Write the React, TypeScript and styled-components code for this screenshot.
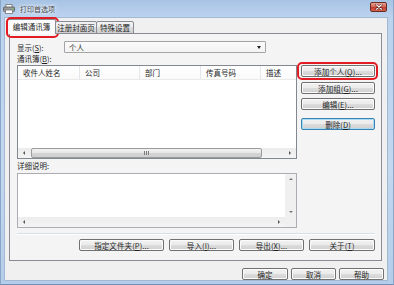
import React from "react";
import styled, { createGlobalStyle, css } from "styled-components";

const FONT = `"Noto Sans CJK SC", "Noto Sans", sans-serif`;

const Global = createGlobalStyle`
  html, body { margin: 0; padding: 0; background: #ffffff; }
  body { font-family: ${FONT}; }
  * { box-sizing: border-box; }
`;

const Window = styled.div`
  width: 394px;
  height: 285px;
  display: flex;
  flex-direction: column;
  background: linear-gradient(#a7c3e4 0px, #bcd3ee 17px, #c3d8ef 60%, #b4cde9 100%);
  border-left: 1px solid #8aa6c8;
  border-right: 1px solid #8aa6c8;
  border-bottom: 1px solid #6f8fb6;
  font-family: ${FONT};
  font-size: 7.5px;
  color: #1f1f1f;
  overflow: hidden;
`;

const TitleBar = styled.div`
  height: 17px;
  display: flex;
  align-items: center;
  padding: 0 6px 0 2px;
  gap: 5px;
`;

const Title = styled.span`
  color: #4a4a4a;
  font-size: 7px;
  text-shadow: 0 0 3px #fff, 0 0 5px #fff;
  flex: 1;
`;

const CloseBtn = styled.div`
  width: 17px;
  height: 10px;
  margin-top: -4px;
  border: 1px solid #6b2c24;
  border-radius: 2px;
  background: linear-gradient(#e8a595, #d4675a 45%, #c2402f 55%, #d3604d);
  display: flex;
  align-items: center;
  justify-content: center;
`;

const Client = styled.div`
  flex: 1;
  margin: 0 5px 3px 3px;
  background: #f0f0f0;
  border: 1px solid #a3b8d3;
  display: flex;
  flex-direction: column;
  padding: 0 3px 0 2px;
`;

const TabStrip = styled.div`
  display: flex;
  align-items: flex-end;
  height: 15px;
  margin-top: 1px;
  position: relative;
  z-index: 2;
`;

const Tab = styled.div<{ $active?: boolean; $w: number }>`
  position: relative;
  width: ${(p) => p.$w}px;
  display: flex;
  align-items: center;
  justify-content: center;
  border: 1px solid #898c95;
  border-radius: 2px 2px 0 0;
  ${(p) =>
    p.$active
      ? css`
          height: 15px;
          background: #fbfbfb;
          border-bottom: none;
          padding-bottom: 1px;
        `
      : css`
          height: 13px;
          margin-left: -1px;
          background: linear-gradient(#f2f2f2, #ebebeb 50%, #dddddd 50%, #cfcfcf);
          border-bottom: 1px solid #898c95;
        `}
`;

const Highlight = styled.div<{ $t: number; $r: number; $b: number; $l: number }>`
  position: absolute;
  top: ${(p) => p.$t}px;
  right: ${(p) => p.$r}px;
  bottom: ${(p) => p.$b}px;
  left: ${(p) => p.$l}px;
  border: 2px solid #e31b23;
  border-radius: 5px;
  pointer-events: none;
`;

const Panel = styled.div`
  margin: -1px 2px 0 2px;
  height: 228px;
  border: 1px solid #898c95;
  background: #f4f4f4;
  padding: 7px 6px 0 7px;
  display: flex;
  flex-direction: column;
`;

const FieldRow = styled.div`
  display: flex;
  align-items: center;
  height: 12px;
`;

const Label = styled.div<{ $w?: number; $h?: number }>`
  ${(p) => (p.$w ? `width: ${p.$w}px;` : "")}
  height: ${(p) => p.$h ?? 11}px;
  line-height: ${(p) => p.$h ?? 11}px;
  white-space: nowrap;
`;

const Select = styled.div`
  width: 202px;
  height: 12px;
  border: 1px solid #a5a5a5;
  border-radius: 1px;
  background: linear-gradient(#fbfbfb, #f3f3f3);
  display: flex;
  align-items: center;
  padding: 0 4px;
  justify-content: space-between;
`;

const Arrow = styled.span`
  width: 0;
  height: 0;
  border-left: 2.5px solid transparent;
  border-right: 2.5px solid transparent;
  border-top: 3px solid #222;
`;

const ListRow = styled.div`
  display: flex;
  gap: 4px;
  height: 94px;
`;

const ListBox = styled.div`
  width: 280px;
  height: 94px;
  border: 1px solid #828790;
  background: #fff;
  display: flex;
  flex-direction: column;
`;

const Header = styled.div`
  height: 14px;
  display: flex;
  border-bottom: 1px solid #eaeaea;
  background: linear-gradient(#ffffff, #fafafa);
`;

const HeaderCell = styled.div<{ $w: number }>`
  width: ${(p) => p.$w}px;
  flex: none;
  padding-left: 5px;
  line-height: 13px;
  border-right: 1px solid #e3e6ea;
  white-space: nowrap;
  &:last-child { border-right: none; flex: 1; }
`;

const ListBody = styled.div`
  flex: 1;
`;

const HScroll = styled.div`
  height: 10px;
  display: flex;
  background: linear-gradient(#ececec, #f4f4f4);
  align-items: stretch;
`;

const ScrollArrow = styled.div<{ $dir: "l" | "r" | "u" | "d" }>`
  width: 12px;
  height: 10px;
  flex: none;
  display: flex;
  align-items: center;
  justify-content: center;
  &::after {
    content: "";
    width: 0;
    height: 0;
    ${(p) =>
      p.$dir === "l"
        ? css`border-top: 2px solid transparent; border-bottom: 2px solid transparent; border-right: 2px solid #555;`
        : p.$dir === "r"
        ? css`border-top: 2px solid transparent; border-bottom: 2px solid transparent; border-left: 2px solid #555;`
        : p.$dir === "u"
        ? css`border-left: 2px solid transparent; border-right: 2px solid transparent; border-bottom: 2px solid #777;`
        : css`border-left: 2px solid transparent; border-right: 2px solid transparent; border-top: 2px solid #777;`}
  }
`;

const Thumb = styled.div<{ $w: number }>`
  width: ${(p) => p.$w}px;
  flex: none;
  margin: 0 0 0 1px;
  border: 1px solid #9c9c9c;
  border-radius: 2px;
  background: linear-gradient(#f3f3f3, #e6e6e6 50%, #d5d5d5 50%, #cfcfcf);
  display: flex;
  align-items: center;
  justify-content: center;
  gap: 1px;
`;

const Grip = styled.span`
  width: 1px;
  height: 4px;
  background: #7a7a7a;
`;

const Track = styled.div`
  flex: 1;
`;

const SideButtons = styled.div`
  width: 77px;
  display: flex;
  flex-direction: column;
`;

const Button = styled.div<{ $w?: number; $focus?: boolean; $mt?: number }>`
  position: relative;
  ${(p) => (p.$w ? `width: ${p.$w}px;` : "")}
  height: 12px;
  flex: none;
  margin-top: ${(p) => p.$mt ?? 0}px;
  border: 1px solid ${(p) => (p.$focus ? "#3c7fb1" : "#707070")};
  border-radius: 2px;
  background: linear-gradient(#f2f2f2, #ebebeb 50%, #dddddd 50%, #cfcfcf);
  box-shadow: inset 0 0 0 1px ${(p) => (p.$focus ? "#a6dcf4" : "#fcfcfc")};
  display: flex;
  align-items: center;
  justify-content: center;
  white-space: nowrap;
  letter-spacing: 0.1px;
`;

const TextBox = styled.div`
  width: 280px;
  height: 55px;
  border: 1px solid #abadb3;
  background: #fff;
  display: grid;
  grid-template-columns: 1fr 11px;
  grid-template-rows: 1fr 10px;
`;

const VScroll = styled.div`
  background: #f0f0f0;
  display: flex;
  flex-direction: column;
  justify-content: space-between;
  align-items: center;
  & > div { width: 11px; height: 10px; }
`;

const Corner = styled.div`
  background: #f0f0f0;
`;

const Separator = styled.div`
  margin-top: 5px;
  height: 2px;
  border-top: 1px solid #d5dfe5;
  border-bottom: 1px solid #ffffff;
`;

const ButtonRow = styled.div`
  margin-top: 4px;
  display: flex;
  justify-content: flex-end;
  gap: 5px;
`;

const DialogButtons = styled.div`
  margin-top: 7px;
  display: flex;
  justify-content: flex-end;
  gap: 3px;
  padding-right: 0px;
`;

const U = styled.span`
  text-decoration: underline;
  text-underline-offset: 1px;
`;

const PrinterIcon = () => (
  <svg width="12" height="10" viewBox="0 0 12 10">
    <rect x="3" y="0.5" width="6" height="3" fill="#fff" stroke="#777" strokeWidth="0.8" />
    <rect x="0.5" y="3" width="11" height="4.5" rx="1" fill="#9a9a9a" stroke="#555" strokeWidth="0.8" />
    <rect x="2.5" y="6" width="7" height="3.5" fill="#fff" stroke="#777" strokeWidth="0.8" />
    <rect x="9" y="4" width="1.5" height="1" fill="#6c6" />
  </svg>
);

const CloseGlyph = () => (
  <svg width="8" height="6" viewBox="0 0 8 6">
    <path d="M1.5 0.8 L6.5 5.2 M6.5 0.8 L1.5 5.2" stroke="#5a1b14" strokeWidth="2.2" strokeLinecap="round" />
    <path d="M1.5 0.8 L6.5 5.2 M6.5 0.8 L1.5 5.2" stroke="#ffffff" strokeWidth="1.2" strokeLinecap="round" />
  </svg>
);

const columns = [
  { label: "收件人姓名", w: 62 },
  { label: "公司", w: 60 },
  { label: "部门", w: 61 },
  { label: "传真号码", w: 60 },
  { label: "描述", w: 35 },
];

export default function App() {
  return (
    <>
      <Global />
      <Window>
        <TitleBar>
          <PrinterIcon />
          <Title>打印首选项</Title>
          <CloseBtn>
            <CloseGlyph />
          </CloseBtn>
        </TitleBar>
        <Client>
          <TabStrip>
            <Tab $active $w={49}>
              编辑通讯簿
              <Highlight $t={-3} $r={-4} $b={-4} $l={-2} />
            </Tab>
            <Tab $w={42}>注册封面页</Tab>
            <Tab $w={38}>特殊设置</Tab>
          </TabStrip>
          <Panel>
            <FieldRow>
              <Label $w={47}>
                显示(<U>S</U>):
              </Label>
              <Select>
                <span>个人</span>
                <Arrow />
              </Select>
            </FieldRow>
            <Label $h={12}>
              通讯簿(<U>B</U>):
            </Label>
            <ListRow>
              <ListBox>
                <Header>
                  {columns.map((c) => (
                    <HeaderCell key={c.label} $w={c.w}>
                      {c.label}
                    </HeaderCell>
                  ))}
                </Header>
                <ListBody />
                <HScroll>
                  <ScrollArrow $dir="l" />
                  <Thumb $w={231}>
                    <Grip />
                    <Grip />
                    <Grip />
                  </Thumb>
                  <Track />
                  <ScrollArrow $dir="r" />
                </HScroll>
              </ListBox>
              <SideButtons>
                <Button>
                  添加个人(<U>Q</U>)...
                  <Highlight $t={-4} $r={-4} $b={-4} $l={-5} />
                </Button>
                <Button $mt={5}>
                  添加组(<U>G</U>)...
                </Button>
                <Button $mt={4}>
                  编辑(<U>E</U>)...
                </Button>
                <Button $mt={8} $focus>
                  删除(<U>D</U>)
                </Button>
              </SideButtons>
            </ListRow>
            <Label $h={14}>详细说明:</Label>
            <TextBox>
              <div />
              <VScroll>
                <ScrollArrow $dir="u" />
                <ScrollArrow $dir="d" />
              </VScroll>
              <HScroll>
                <ScrollArrow $dir="l" />
                <Track />
                <ScrollArrow $dir="r" />
              </HScroll>
              <Corner />
            </TextBox>
            <Separator />
            <ButtonRow>
              <Button $w={85}>
                指定文件夹(<U>P</U>)...
              </Button>
              <Button $w={65}>
                导入(<U>I</U>)...
              </Button>
              <Button $w={65}>
                导出(<U>X</U>)...
              </Button>
              <Button $w={66}>
                关于(<U>T</U>)
              </Button>
            </ButtonRow>
          </Panel>
          <DialogButtons>
            <Button $w={46}>确定</Button>
            <Button $w={45}>取消</Button>
            <Button $w={45}>帮助</Button>
          </DialogButtons>
        </Client>
      </Window>
    </>
  );
}
